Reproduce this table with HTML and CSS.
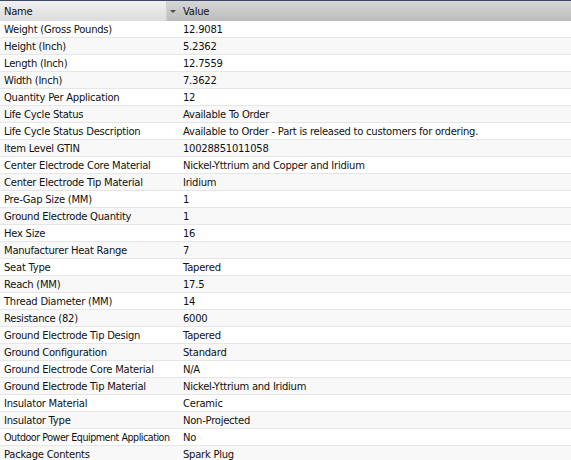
FILE: index.html
```html
<!DOCTYPE html>
<html>
<head>
<meta charset="utf-8">
<link rel="stylesheet" href="styles.css">
</head>
<body>
<div class="grid">
  <div class="head">
    <div class="hname">Name</div>
    <div class="htrig"><span class="arrow"></span></div>
    <div class="hval">Value</div>
  </div>
  <div class="row"><div class="n">Weight (Gross Pounds)</div><div class="v">12.9081</div></div>
  <div class="row alt"><div class="n">Height (Inch)</div><div class="v">5.2362</div></div>
  <div class="row"><div class="n">Length (Inch)</div><div class="v">12.7559</div></div>
  <div class="row alt"><div class="n">Width (Inch)</div><div class="v">7.3622</div></div>
  <div class="row"><div class="n">Quantity Per Application</div><div class="v">12</div></div>
  <div class="row alt"><div class="n">Life Cycle Status</div><div class="v">Available To Order</div></div>
  <div class="row"><div class="n">Life Cycle Status Description</div><div class="v">Available to Order - Part is released to customers for ordering.</div></div>
  <div class="row alt"><div class="n">Item Level GTIN</div><div class="v">10028851011058</div></div>
  <div class="row"><div class="n">Center Electrode Core Material</div><div class="v">Nickel-Yttrium and Copper and Iridium</div></div>
  <div class="row alt"><div class="n">Center Electrode Tip Material</div><div class="v">Iridium</div></div>
  <div class="row"><div class="n">Pre-Gap Size (MM)</div><div class="v">1</div></div>
  <div class="row alt"><div class="n">Ground Electrode Quantity</div><div class="v">1</div></div>
  <div class="row"><div class="n">Hex Size</div><div class="v">16</div></div>
  <div class="row alt"><div class="n">Manufacturer Heat Range</div><div class="v">7</div></div>
  <div class="row"><div class="n">Seat Type</div><div class="v">Tapered</div></div>
  <div class="row alt"><div class="n">Reach (MM)</div><div class="v">17.5</div></div>
  <div class="row"><div class="n">Thread Diameter (MM)</div><div class="v">14</div></div>
  <div class="row alt"><div class="n">Resistance (82)</div><div class="v">6000</div></div>
  <div class="row"><div class="n">Ground Electrode Tip Design</div><div class="v">Tapered</div></div>
  <div class="row alt"><div class="n">Ground Configuration</div><div class="v">Standard</div></div>
  <div class="row"><div class="n">Ground Electrode Core Material</div><div class="v">N/A</div></div>
  <div class="row alt"><div class="n">Ground Electrode Tip Material</div><div class="v">Nickel-Yttrium and Iridium</div></div>
  <div class="row"><div class="n">Insulator Material</div><div class="v">Ceramic</div></div>
  <div class="row alt"><div class="n">Insulator Type</div><div class="v">Non-Projected</div></div>
  <div class="row"><div class="n tight">Outdoor Power Equipment Application</div><div class="v">No</div></div>
  <div class="row alt"><div class="n">Package Contents</div><div class="v">Spark Plug</div></div>
</div>
</body>
</html>
```
FILE: styles.css
```css
html, body {
  margin: 0;
  padding: 0;
  background: #fff;
  overflow: hidden;
}
.grid {
  width: 571px;
  font-family: "DejaVu Sans", Verdana, sans-serif;
  font-size: 10px;
  letter-spacing: -0.25px;
  color: #111;
}
.head {
  display: grid;
  grid-template-columns: 166px 12px 1fr;
  height: 20px;
  border-top: 1px solid #3d4866;
}
.hname {
  background: linear-gradient(#f0f0f0, #dcdcdc);
  padding-left: 4px;
  padding-top: 1px;
  line-height: 19px;
}
.htrig {
  background: linear-gradient(#d6d6d6, #bcbcbc);
  display: flex;
  align-items: center;
  justify-content: center;
  border-left: 1px solid #d0d0d0;
}
.arrow {
  width: 0;
  height: 0;
  border-left: 3px solid transparent;
  border-right: 3px solid transparent;
  border-top: 3px solid #4a4a4a;
}
.hval {
  background: linear-gradient(#d6d6d6, #bcbcbc);
  padding-left: 5px;
  padding-top: 1px;
  line-height: 19px;
}
.row {
  display: grid;
  grid-template-columns: 178px 1fr;
  height: 16px;
  border-bottom: 1px solid #e6e6e6;
  background: #fff;
}
.row.alt {
  background: #f8f8f8;
}
.n, .v {
  padding-top: 2px;
  line-height: 14px;
  white-space: nowrap;
  overflow: hidden;
}
.n {
  padding-left: 4px;
}
.n.tight {
  font-size: 9.6px;
  letter-spacing: -0.5px;
}
.v {
  padding-left: 5px;
}
```
